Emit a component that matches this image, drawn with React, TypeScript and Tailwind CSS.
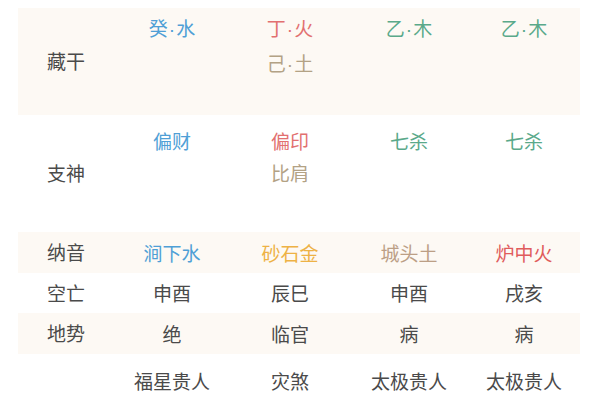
import React from "react";

type Cell = { t: string; c: string }[];

const blue = "text-[#4f9fd6]";
const red = "text-[#e27070]";
const green = "text-[#5aa98a]";
const earth = "text-[#b3a285]";
const gold = "text-[#eeb245]";
const clay = "text-[#bc9f86]";
const fire = "text-[#e05c5c]";
const dark = "text-[#4a4a4a]";

function Txt({ t }: { t: string }) {
  if (!t.includes("·")) return <>{t}</>;
  const [a, b] = t.split("·");
  return (
    <>
      {a}
      <span className="font-['Liberation_Sans'] px-[1px]">·</span>
      {b}
    </>
  );
}

function Row({
  label,
  cells,
  bg,
  h,
  pt,
  lh,
  center,
}: {
  label: string;
  cells: Cell[];
  bg: string;
  h: string;
  pt: string;
  lh: string;
  center?: boolean;
}) {
  return (
    <div className={`grid grid-cols-[96px_116px_120px_118px_1fr] ${bg} ${h}`}>
      <div className={`flex items-center justify-center ${dark}`}>{label}</div>
      {cells.map((cell, i) => (
        <div
          key={i}
          className={`flex flex-col items-center ${center ? "justify-center" : pt} ${lh}`}
        >
          {cell.map((x, j) => (
            <span key={j} className={x.c}>
              <Txt t={x.t} />
            </span>
          ))}
        </div>
      ))}
    </div>
  );
}

export default function App() {
  return (
    <div
      className="w-[600px] h-[400px] overflow-hidden bg-white pt-[8px] pl-[18px] pr-[20px] text-[19px]"
      style={{ fontFamily: '"Noto Sans CJK SC", "Noto Sans", sans-serif' }}
    >
      <Row
        label="藏干"
        bg="bg-[#fdf9f4]"
        h="h-[107px]"
        pt="pt-[3px]"
        lh="leading-[33px]"
        cells={[
          [{ t: "癸·水", c: blue }],
          [
            { t: "丁·火", c: red },
            { t: "己·土", c: earth },
          ],
          [{ t: "乙·木", c: green }],
          [{ t: "乙·木", c: green }],
        ]}
      />
      <Row
        label="支神"
        bg="bg-white"
        h="h-[117px]"
        pt="pt-[10px]"
        lh="leading-[32px]"
        cells={[
          [{ t: "偏财", c: blue }],
          [
            { t: "偏印", c: red },
            { t: "比肩", c: earth },
          ],
          [{ t: "七杀", c: green }],
          [{ t: "七杀", c: green }],
        ]}
      />
      <Row
        label="纳音"
        bg="bg-[#fdf9f4]"
        h="h-[41px]"
        pt=""
        lh="leading-[24px]"
        center
        cells={[
          [{ t: "涧下水", c: blue }],
          [{ t: "砂石金", c: gold }],
          [{ t: "城头土", c: clay }],
          [{ t: "炉中火", c: fire }],
        ]}
      />
      <Row
        label="空亡"
        bg="bg-white"
        h="h-[40px]"
        pt=""
        lh="leading-[24px]"
        center
        cells={[
          [{ t: "申酉", c: dark }],
          [{ t: "辰巳", c: dark }],
          [{ t: "申酉", c: dark }],
          [{ t: "戌亥", c: dark }],
        ]}
      />
      <Row
        label="地势"
        bg="bg-[#fdf9f4]"
        h="h-[41px]"
        pt=""
        lh="leading-[24px]"
        center
        cells={[
          [{ t: "绝", c: dark }],
          [{ t: "临官", c: dark }],
          [{ t: "病", c: dark }],
          [{ t: "病", c: dark }],
        ]}
      />
      <Row
        label=""
        bg="bg-white"
        h="h-[120px]"
        pt="pt-[11px]"
        lh="leading-[32px]"
        cells={[
          [
            { t: "福星贵人", c: dark },
            { t: "天乙贵人", c: dark },
          ],
          [
            { t: "灾煞", c: dark },
            { t: "劫煞", c: dark },
          ],
          [
            { t: "太极贵人", c: dark },
            { t: "天乙贵人", c: dark },
          ],
          [
            { t: "太极贵人", c: dark },
            { t: "天乙贵人", c: dark },
          ],
        ]}
      />
    </div>
  );
}
